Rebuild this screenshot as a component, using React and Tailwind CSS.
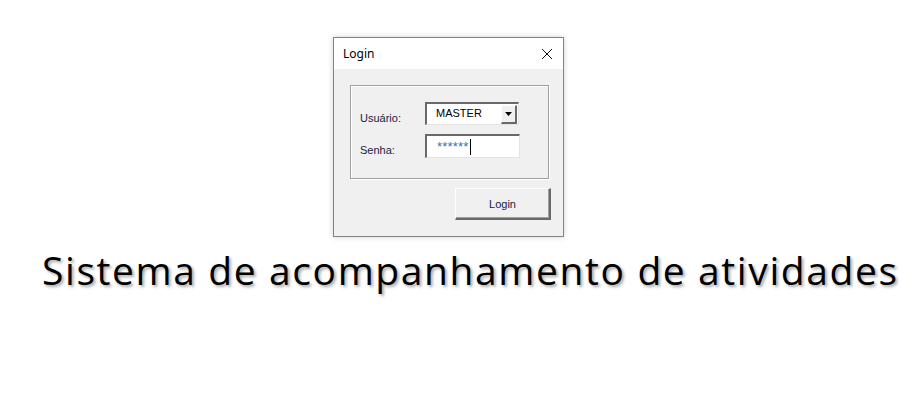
export default function App() {
  return (
    <div className="w-[921px] h-[400px] bg-white overflow-hidden relative">
      <div className="ml-[333px] mt-[37px] w-[231px] h-[200px] border border-[#838383] bg-[#f0f0f0] flex flex-col shadow-[0_0_6px_rgba(0,0,0,0.18)]">
        <div className="h-[31px] bg-white flex items-center justify-between pl-[9px] pr-[9px] shrink-0">
          <span className="text-[12px] text-black" style={{ fontFamily: '"Noto Sans", "Open Sans", sans-serif' }}>Login</span>
          <svg width="12" height="12" viewBox="0 0 12 12" className="mr-[1px]">
            <path d="M1 1 L11 11 M11 1 L1 11" stroke="#111" strokeWidth="1" fill="none" />
          </svg>
        </div>
        <div className="flex-1 flex flex-col" style={{ fontFamily: '"Liberation Sans", Arial, sans-serif' }}>
          <div className="ml-[16px] mt-[16px] w-[199px] h-[94px] border border-[#a0a0a0] shadow-[inset_1px_1px_0_#fff,1px_1px_0_#fff] flex flex-col pl-[9px] pt-[16px]">
            <div className="flex items-center h-[23px]">
              <span className="w-[65px] text-[11px] text-[#1b1b40] mt-[9px]">Usuário:</span>
              <div className="w-[94px] h-[23px] bg-white border-t-2 border-l-2 border-t-[#696969] border-l-[#696969] border-b border-r border-b-[#e3e3e3] border-r-[#e3e3e3] flex items-center justify-between">
                <span className="text-[11px] text-black pl-[9px] -mt-[2px]">MASTER</span>
                <div className="w-[16px] h-[19px] bg-[#f0f0f0] border-t border-l border-t-white border-l-white border-b-2 border-r-2 border-b-[#696969] border-r-[#696969] flex items-center justify-center mr-[1px]">
                  <svg width="7" height="4" viewBox="0 0 7 4">
                    <path d="M0 0 H7 L3.5 4 Z" fill="#000" />
                  </svg>
                </div>
              </div>
            </div>
            <div className="flex items-center h-[24px] mt-[9px]">
              <span className="w-[65px] text-[11px] text-[#1b1b40] mt-[8px]">Senha:</span>
              <div className="w-[95px] h-[24px] bg-white border-t-2 border-l-2 border-t-[#696969] border-l-[#696969] border-b border-r border-b-[#e3e3e3] border-r-[#e3e3e3] flex items-start pl-[10px] pt-[3px]">
                <span className="text-[13px] text-[#3c6fb0] tracking-[0.2px] leading-[16px]">******</span>
                <span className="w-px h-[16px] bg-black ml-[1px]"></span>
              </div>
            </div>
          </div>
          <div className="flex justify-end pr-[12px] mt-[9px]">
            <button className="w-[96px] h-[32px] bg-[#f0f0f0] border-t border-l border-t-white border-l-white border-b-2 border-r-2 border-b-[#696969] border-r-[#696969] text-[11px] text-[#1b1b40] pt-[2px] shadow-[inset_-1px_-1px_0_#a0a0a0]">
              Login
            </button>
          </div>
        </div>
      </div>
      <div className="ml-[42px] mt-[10px] text-[39px] leading-[46px] tracking-[1.6px] text-black whitespace-nowrap [text-shadow:2px_2px_3px_rgba(0,0,0,0.35)]" style={{ fontFamily: '"Open Sans", "Noto Sans", sans-serif' }}>
        Sistema de acompanhamento de atividades
      </div>
    </div>
  );
}
